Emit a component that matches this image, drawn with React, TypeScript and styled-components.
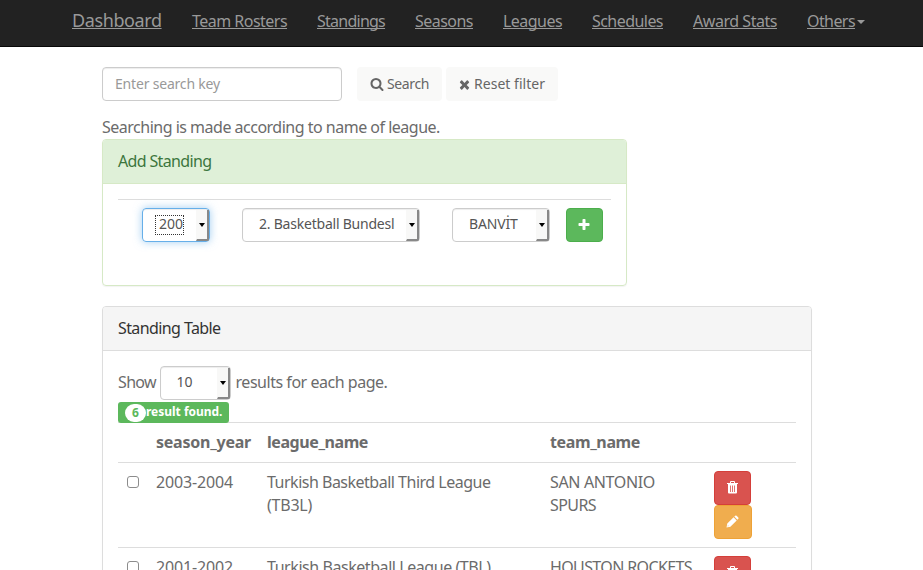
import React from 'react';
import styled, { createGlobalStyle } from 'styled-components';

const GlobalStyle = createGlobalStyle`
  *, *::before, *::after { box-sizing: border-box; }
  html, body { margin: 0; height: 570px; overflow: hidden; background: #fff; }
  body {
    font-family: "Noto Sans", "Open Sans", sans-serif;
    font-size: 16px;
    line-height: 23px;
    color: #6b6b6b;
  }
`;

const Text = styled.span<{ $track?: number }>`
  letter-spacing: ${({ $track = 0 }) => $track}px;
  white-space: nowrap;
`;

const Navbar = styled.nav`
  display: flex;
  height: 47px;
  padding: 9px 0 0 72px;
  background: #222;
  border-bottom: 1px solid #080808;
`;

const NavLink = styled.a<{ $width: number; $track: number; $brand?: boolean }>`
  flex: none;
  width: ${({ $width }) => $width}px;
  margin-right: 30px;
  font-size: ${({ $brand }) => ($brand ? 18 : 16)}px;
  line-height: ${({ $brand }) => ($brand ? 23 : 24)}px;
  letter-spacing: ${({ $track }) => $track}px;
  white-space: nowrap;
  color: #999;
  text-decoration: underline;
  text-decoration-thickness: 1px;
  text-underline-offset: 1px;
  text-decoration-skip-ink: none;
`;

const NavCaret = styled.span`
  align-self: flex-start;
  margin: 11px 0 0 -28px;
  border: 4px solid transparent;
  border-top-color: #999;
  border-bottom: 0;
`;

const Page = styled.main`
  width: 710px;
  margin: 20px 0 0 102px;
`;

const SearchBar = styled.div`
  display: flex;
  height: 34px;
  margin-bottom: 15px;
`;

const SearchInput = styled.input`
  width: 240px;
  height: 34px;
  margin-right: 15px;
  padding: 5px 12px 6px;
  border: 1px solid #ccc;
  border-radius: 4px;
  box-shadow: inset 0 1px 1px rgba(0, 0, 0, 0.075);
  font: 14px/20px "Noto Sans", sans-serif;
  letter-spacing: -0.19px;
  color: #555;
  outline: none;
  &::placeholder { color: #999; opacity: 1; }
`;

const PlainButton = styled.button<{ $width: number; $gap: number }>`
  display: flex;
  align-items: center;
  gap: ${({ $gap }) => $gap}px;
  width: ${({ $width }) => $width}px;
  height: 34px;
  margin-right: 4px;
  padding: 0 0 0 13px;
  border: 0;
  border-radius: 4px;
  background: #f9f9f8;
  font: 14px/20px "Noto Sans", sans-serif;
  color: #666;
`;

const tones = {
  success: ['#5cb85c', '#4cae4c'],
  danger: ['#d9534f', '#d43f3a'],
  warning: ['#f0ad4e', '#eea236'],
};

const IconButton = styled.button<{ $tone: keyof typeof tones; $width?: number }>`
  display: flex;
  align-items: center;
  justify-content: center;
  width: ${({ $width = 37 }) => $width}px;
  height: 34px;
  padding: 0 1px 1px 0;
  border: 1px solid ${({ $tone }) => tones[$tone][1]};
  border-radius: 4px;
  background: ${({ $tone }) => tones[$tone][0]};
  color: #fff;
`;

const Glyph = styled.svg`
  display: block;
  flex: none;
  fill: currentColor;
`;

const Panel = styled.section<{ $success?: boolean }>`
  width: ${({ $success }) => ($success ? '525px' : '710px')};
  height: ${({ $success }) => ($success ? '147px' : '400px')};
  margin-bottom: 20px;
  border: 1px solid ${({ $success }) => ($success ? '#d6e9c6' : '#ddd')};
  border-radius: 4px;
  box-shadow: 0 1px 1px rgba(0, 0, 0, 0.05);
`;

const PanelHeading = styled.header<{ $success?: boolean }>`
  height: 44px;
  padding: 10px 15px;
  border-bottom: 1px solid ${({ $success }) => ($success ? '#d6e9c6' : '#ddd')};
  border-radius: 3px 3px 0 0;
  background: ${({ $success }) => ($success ? '#dff0d8' : '#f5f5f5')};
  color: ${({ $success }) => ($success ? '#3c763d' : '#333')};
`;

const PanelBody = styled.div`
  padding: 15px;
`;

const FormRow = styled.div`
  display: flex;
  padding: 8px 0 0 24px;
  border-top: 1px solid #ddd;
`;

const SelectBox = styled.div<{ $width: number; $gap?: number; $focus?: boolean }>`
  display: flex;
  flex: none;
  width: ${({ $width }) => $width}px;
  height: 34px;
  margin-right: ${({ $gap = 0 }) => $gap}px;
  padding-left: 16px;
  border: 1px solid ${({ $focus }) => ($focus ? '#66afe9' : '#ccc')};
  border-radius: 4px;
  box-shadow: inset 0 1px 1px rgba(0, 0, 0, 0.075)${({ $focus }) => ($focus ? ', 0 0 8px rgba(102, 175, 233, 0.6)' : '')};
  font-size: 14px;
  line-height: 29px;
  color: #555;
`;

const SelectValue = styled.span<{ $track: number; $focus?: boolean }>`
  flex: 1;
  letter-spacing: ${({ $track }) => $track}px;
  white-space: nowrap;
  ${({ $focus }) =>
    $focus &&
    `flex: none; width: 29px; height: 20px; margin: 6px auto 0 -4px; padding-left: 3px;
     border: 1px dotted #333; line-height: 15px;`}
`;

const SelectArrow = styled.span`
  display: flex;
  align-items: center;
  justify-content: center;
  width: 13px;
  height: 31px;
  margin-top: 1px;
  border: solid #888;
  border-width: 0 2px 2px 0;
  border-left: 1px solid #f8f8f7;
  border-bottom-right-radius: 2px;
  background: #f8f8f7;
  &::after {
    content: "";
    border: 3px solid transparent;
    border-top: 4px solid #000;
    border-bottom: 0;
  }
`;

const PageSize = styled.div`
  display: flex;
  height: 34px;
  line-height: 32px;
`;

const ResultLabel = styled.div`
  position: relative;
  z-index: 1;
  display: flex;
  align-items: center;
  width: 111px;
  height: 21px;
  margin-top: 2px;
  padding-left: 7px;
  border-radius: 3px;
  background: #5cb85c;
  color: #fff;
  font-size: 12px;
  font-weight: 700;
  line-height: 19px;
`;

const Badge = styled.span`
  width: 21px;
  height: 18px;
  margin-top: 1px;
  border-radius: 10px;
  background: #fff;
  color: #5cb85c;
  line-height: 18px;
  text-align: center;
`;

const ResultText = styled(Text)`
  align-self: flex-start;
`;

const Table = styled.div`
  margin-top: -1px;
`;

const Row = styled.div<{ $head?: boolean }>`
  display: grid;
  grid-template-columns: 30px 111px 283px 164px 1fr;
  height: ${({ $head }) => ($head ? 40 : 85)}px;
  padding-top: 8px;
  border-top: 1px solid #ddd;
  font-weight: ${({ $head }) => ($head ? 700 : 400)};
`;

const Cell = styled.div`
  padding-left: 8px;
`;

const Checkbox = styled.input`
  appearance: none;
  display: block;
  width: 12px;
  height: 12px;
  margin: 5px 0 0 1px;
  border: 1px solid #8c8c8c;
  border-radius: 3px;
  background: #fff;
`;

const icons = {
  search:
    'M1216 832q0-185-131.5-316.5t-316.5-131.5-316.5 131.5-131.5 316.5 131.5 316.5 316.5 131.5 316.5-131.5 131.5-316.5zm512 832q0 52-38 90t-90 38q-54 0-90-38l-343-342q-179 124-399 124-143 0-273.5-55.5t-225-150-150-225-55.5-273.5 55.5-273.5 150-225 225-150 273.5-55.5 273.5 55.5 225 150 150 225 55.5 273.5q0 220-124 399l343 343q37 37 37 90z',
  times:
    'M1490 1322q0 40-28 68l-136 136q-28 28-68 28t-68-28l-294-294-294 294q-28 28-68 28t-68-28l-136-136q-28-28-28-68t28-68l294-294-294-294q-28-28-28-68t28-68l136-136q28-28 68-28t68 28l294 294 294-294q28-28 68-28t68 28l136 136q28 28 28 68t-28 68l-294 294 294 294q28 28 28 68z',
  plus:
    'M1600 736v192q0 40-28 68t-68 28h-416v416q0 40-28 68t-68 28h-192q-40 0-68-28t-28-68v-416h-416q-40 0-68-28t-28-68v-192q0-40 28-68t68-28h416v-416q0-40 28-68t68-28h192q40 0 68 28t28 68v416h416q40 0 68 28t28 68z',
};

const Icon = ({ name, size = 14, box = '0 0 1792 1792' }: { name: keyof typeof icons; size?: number; box?: string }) => (
  <Glyph width={size} height={size} viewBox={box}>
    <path d={icons[name]} />
  </Glyph>
);

const TrashIcon = () => (
  <Glyph width="11" height="13" viewBox="0 0 11 13">
    <path
      fillRule="evenodd"
      d="M3 2V1Q3 0 4 0h3q1 0 1 1v1h3v1H0V2zm1 0h3V1H4zM1 3h9v8.5q0 1-1 1H2q-1 0-1-1zM3 4.5v6.5h.8V4.5zm2.1 0v6.5h.8V4.5zm2.1 0v6.5h.8V4.5z"
    />
  </Glyph>
);

const PencilIcon = () => (
  <Glyph width="13" height="13" viewBox="0 0 13 13">
    <path d="M9.2.7q.7-.6 1.4 0l1.7 1.7q.6.7 0 1.4l-.9.9-3.1-3.1zM7.6 2.3l3.1 3.1-6.3 6.3L.5 12.5l.8-3.9zM1.9 10.2l-.3 1.2 1.2-.3z" fillRule="evenodd" />
  </Glyph>
);

const Select = ({ value, width, gap, track, focus }: { value: string; width: number; gap?: number; track: number; focus?: boolean }) => (
  <SelectBox $width={width} $gap={gap} $focus={focus}>
    <SelectValue $track={track} $focus={focus}>{value}</SelectValue>
    <SelectArrow />
  </SelectBox>
);

const links: [string, number, number][] = [
  ['Team Rosters', 95, -0.52],
  ['Standings', 68, -0.75],
  ['Seasons', 58, -0.53],
  ['Leagues', 59, -0.54],
  ['Schedules', 71, -0.55],
  ['Award Stats', 84, -0.46],
  ['Others', 48, -0.58],
];

type Line = [string, number];
const rows: { season: string; league: Line[]; team: Line[] }[] = [
  {
    season: '2003-2004',
    league: [['Turkish Basketball Third League', -0.5], ['(TB3L)', -0.24]],
    team: [['SAN ANTONIO', -0.35], ['SPURS', -0.58]],
  },
  {
    season: '2001-2002',
    league: [['Turkish Basketball League (TBL)', -0.44]],
    team: [['HOUSTON ROCKETS', -0.62]],
  },
];

const Lines = ({ lines }: { lines: Line[] }) => (
  <Cell>
    {lines.map(([text, track]) => (
      <div key={text}><Text $track={track}>{text}</Text></div>
    ))}
  </Cell>
);

export default function App() {
  return (
    <>
      <GlobalStyle />
      <Navbar>
        <NavLink $width={90} $track={-0.4} $brand>Dashboard</NavLink>
        {links.map(([label, width, track]) => (
          <NavLink key={label} $width={width} $track={track}>{label}</NavLink>
        ))}
        <NavCaret />
      </Navbar>
      <Page>
        <SearchBar>
          <SearchInput placeholder="Enter search key" />
          <PlainButton $width={85} $gap={3}><Icon name="search" /><Text $track={-0.38}>Search</Text></PlainButton>
          <PlainButton $width={112} $gap={4}><Icon name="times" size={11} box="190 190 1412 1412" /><Text $track={0.03}>Reset filter</Text></PlainButton>
        </SearchBar>
        <Text $track={-0.5}>Searching is made according to name of league.</Text>
        <Panel $success>
          <PanelHeading $success><Text $track={-0.65}>Add Standing</Text></PanelHeading>
          <PanelBody>
            <FormRow>
              <Select value="200" width={68} gap={32} track={0} focus />
              <Select value="2. Basketball Bundesl" width={178} gap={32} track={-0.22} />
              <Select value="BANVİT" width={98} gap={16} track={-0.15} />
              <IconButton $tone="success"><Icon name="plus" /></IconButton>
            </FormRow>
          </PanelBody>
        </Panel>
        <Panel>
          <PanelHeading><Text $track={-0.6}>Standing Table</Text></PanelHeading>
          <PanelBody>
            <PageSize>
              <Text $track={-0.65}>Show&nbsp;</Text>
              <Select value="10" width={71} gap={5} track={0} />
              <Text $track={-0.47}>results for each page.</Text>
            </PageSize>
            <ResultLabel>
              <Badge>6</Badge>
              <ResultText $track={-0.02}>result found.</ResultText>
            </ResultLabel>
            <Table>
              <Row $head>
                <Cell />
                <Cell><Text $track={-0.24}>season_year</Text></Cell>
                <Cell><Text $track={-0.43}>league_name</Text></Cell>
                <Cell><Text $track={-0.38}>team_name</Text></Cell>
                <Cell />
              </Row>
              {rows.map((row) => (
                <Row key={row.season}>
                  <Cell><Checkbox type="checkbox" /></Cell>
                  <Cell><Text $track={-0.15}>{row.season}</Text></Cell>
                  <Lines lines={row.league} />
                  <Lines lines={row.team} />
                  <Cell>
                    <IconButton $tone="danger"><TrashIcon /></IconButton>
                    <IconButton $tone="warning" $width={38}><PencilIcon /></IconButton>
                  </Cell>
                </Row>
              ))}
            </Table>
          </PanelBody>
        </Panel>
      </Page>
    </>
  );
}
